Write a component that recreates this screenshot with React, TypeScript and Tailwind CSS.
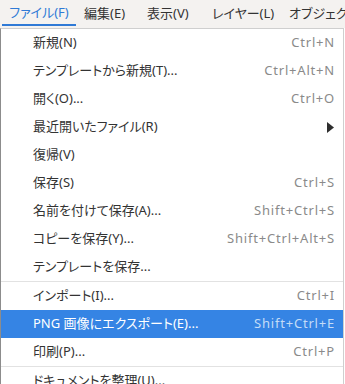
import React from "react";

type Item =
  | { sep: true }
  | { label: string; shortcut?: string; submenu?: boolean; active?: boolean; sep?: false };

const items: Item[] = [
  { label: "新規(N)", shortcut: "Ctrl+N" },
  { label: "テンプレートから新規(T)...", shortcut: "Ctrl+Alt+N" },
  { label: "開く(O)...", shortcut: "Ctrl+O" },
  { label: "最近開いたファイル(R)", submenu: true },
  { label: "復帰(V)" },
  { label: "保存(S)", shortcut: "Ctrl+S" },
  { label: "名前を付けて保存(A)...", shortcut: "Shift+Ctrl+S" },
  { label: "コピーを保存(Y)...", shortcut: "Shift+Ctrl+Alt+S" },
  { label: "テンプレートを保存..." },
  { sep: true },
  { label: "インポート(I)...", shortcut: "Ctrl+I" },
  { label: "PNG 画像にエクスポート(E)...", shortcut: "Shift+Ctrl+E", active: true },
  { label: "印刷(P)...", shortcut: "Ctrl+P" },
  { sep: true },
  { label: "ドキュメントを整理(U)..." },
];

const menus = [
  { label: "ファイル(F)", w: "w-[74px]" },
  { label: "編集(E)", w: "w-[63px]" },
  { label: "表示(V)", w: "w-[65px]" },
  { label: "レイヤー(L)", w: "w-[77px]" },
  { label: "オブジェクト(O)", w: "w-[90px]" },
];

export default function App() {
  return (
    <div className="w-[345px] h-[384px] overflow-hidden bg-white text-[13px] font-['Noto_Sans','Noto_Sans_CJK_JP',sans-serif] [font-feature-settings:'palt']">
      {/* menu bar */}
      <div className="flex h-[28px] pb-[2px] pl-[2px] bg-[#f4f2f0] whitespace-nowrap">
        {menus.map((m, i) => (
          <div
            key={m.label}
            className={
              m.w +
              (i === 0
                ? " shrink-0 flex items-center justify-center pt-[2px] text-[#2f7ad6] border-b-2 border-[#2f7ad6]"
                : " shrink-0 flex items-center pl-[8px] pt-[2px] text-[#333333]")
            }
          >
            {m.label}
          </div>
        ))}
      </div>

      {/* dropdown */}
      <div className="w-[344px] border-t border-l border-r border-t-[#cfcfcf] border-l-[#8c8c8c] border-r-[#cfcfcf] bg-white">
        {items.map((it, i) =>
          it.sep ? (
            <div key={i} className="h-px bg-[#e2e2e2]" />
          ) : (
            <div
              key={i}
              className={
                "flex items-center h-[28px] pl-[32px] pr-[8px] whitespace-nowrap " +
                (it.active ? "bg-[#3584e4] text-white" : "text-[#333333]")
              }
            >
              <span className="flex-1">{it.label}</span>
              {it.shortcut && (
                <span
                  className={
                    "tracking-[0.8px] " + (it.active ? "text-[#c4dcf7]" : "text-[#8a8a8a]")
                  }
                >
                  {it.shortcut}
                </span>
              )}
              {it.submenu && (
                <svg width="7" height="11" viewBox="0 0 7 11" className="mr-[1px]">
                  <path d="M0 0 L7 5.5 L0 11 Z" fill="#2e2e2e" />
                </svg>
              )}
            </div>
          )
        )}
      </div>
    </div>
  );
}
